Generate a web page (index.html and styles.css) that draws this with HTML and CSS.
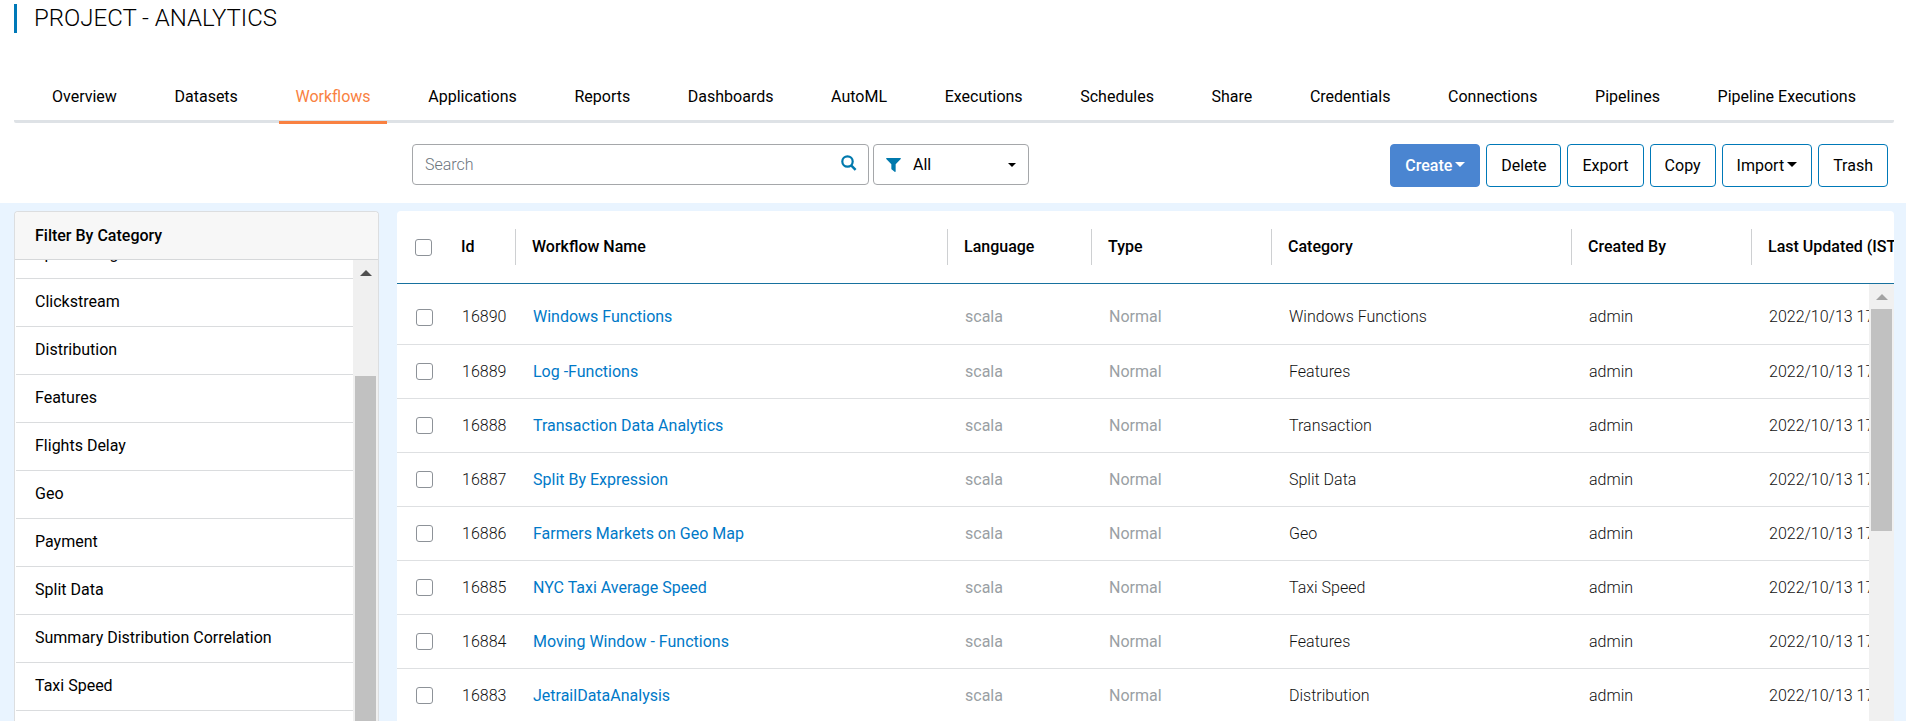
FILE: index.html
```html
<!DOCTYPE html>
<html lang="en">
<head>
<meta charset="utf-8">
<title>Project - Analytics</title>
<link rel="stylesheet" href="styles.css">
</head>
<body>
<header class="page-header">
  <h1 class="page-title">PROJECT - ANALYTICS</h1>
</header>
<nav class="tabs" aria-label="Project sections">
  <a class="tab" href="#">Overview</a>
  <a class="tab" href="#">Datasets</a>
  <a class="tab tab-active" href="#" aria-current="page">Workflows</a>
  <a class="tab" href="#">Applications</a>
  <a class="tab" href="#">Reports</a>
  <a class="tab" href="#">Dashboards</a>
  <a class="tab" href="#">AutoML</a>
  <a class="tab" href="#">Executions</a>
  <a class="tab" href="#">Schedules</a>
  <a class="tab" href="#">Share</a>
  <a class="tab" href="#">Credentials</a>
  <a class="tab" href="#">Connections</a>
  <a class="tab" href="#">Pipelines</a>
  <a class="tab" href="#">Pipeline Executions</a>
</nav>
<div class="toolbar">
  <div class="filters">
    <div class="field search">
      <input class="search-input" type="text" placeholder="Search" aria-label="Search">
      <svg class="search-icon" viewBox="0 0 16 16" aria-hidden="true"><circle cx="6.5" cy="6.5" r="5.2" fill="none" stroke="currentColor" stroke-width="2.2"/><path d="M10.4 10.6 L14.6 14.8" stroke="currentColor" stroke-width="2.5"/></svg>
    </div>
    <div class="field scope">
      <svg class="funnel-icon" viewBox="0 0 16 16" aria-hidden="true"><path fill="currentColor" d="M.8 1H15.2C15.9 1 16.1 1.7 15.7 2.1L10.3 7.7V15.2C10.3 15.9 9.7 16.1 9.2 15.7L6.2 13.4C5.9 13.2 5.7 12.9 5.7 12.6V7.7L.3 2.1C-.1 1.7 .1 1 .8 1Z"/></svg>
      <select class="scope-select" aria-label="Show"><option>All</option></select>
      <span class="caret"></span>
    </div>
  </div>
  <div class="actions">
    <button class="btn btn-primary" type="button">Create<span class="caret caret-inline"></span></button>
    <button class="btn" type="button">Delete</button>
    <button class="btn" type="button">Export</button>
    <button class="btn" type="button">Copy</button>
    <button class="btn" type="button">Import<span class="caret caret-inline"></span></button>
    <button class="btn" type="button">Trash</button>
  </div>
</div>
<main class="content">
  <aside class="sidebar">
    <h2 class="sidebar-title">Filter By Category</h2>
    <div class="sidebar-body">
      <ul class="categories">
        <li><a href="#">Spam Filing</a></li>
        <li><a href="#">Clickstream</a></li>
        <li><a href="#">Distribution</a></li>
        <li><a href="#">Features</a></li>
        <li><a href="#">Flights Delay</a></li>
        <li><a href="#">Geo</a></li>
        <li><a href="#">Payment</a></li>
        <li><a href="#">Split Data</a></li>
        <li><a href="#">Summary Distribution Correlation</a></li>
        <li><a href="#">Taxi Speed</a></li>
      </ul>
      <div class="scrollbar sidebar-scrollbar"><span class="scroll-up"></span><span class="thumb"></span></div>
    </div>
  </aside>
  <section class="panel">
    <table class="workflows">
      <colgroup><col class="c-check"><col class="c-id"><col class="c-name"><col class="c-lang"><col class="c-type"><col class="c-cat"><col class="c-by"><col class="c-date"></colgroup>
      <thead>
        <tr>
          <th><input class="check" type="checkbox" aria-label="Select all workflows"></th>
          <th>Id</th>
          <th><div class="head">Workflow Name</div></th>
          <th><div class="head">Language</div></th>
          <th><div class="head">Type</div></th>
          <th><div class="head">Category</div></th>
          <th><div class="head">Created By</div></th>
          <th><div class="head">Last Updated (IST)</div></th>
        </tr>
      </thead>
      <tbody>
        <tr><td><input class="check" type="checkbox" aria-label="Select 16890"></td><td>16890</td><td><a href="#">Windows Functions</a></td><td class="muted">scala</td><td class="muted">Normal</td><td>Windows Functions</td><td>admin</td><td>2022/10/13 17:12</td></tr>
        <tr><td><input class="check" type="checkbox" aria-label="Select 16889"></td><td>16889</td><td><a href="#">Log -Functions</a></td><td class="muted">scala</td><td class="muted">Normal</td><td>Features</td><td>admin</td><td>2022/10/13 17:12</td></tr>
        <tr><td><input class="check" type="checkbox" aria-label="Select 16888"></td><td>16888</td><td><a href="#">Transaction Data Analytics</a></td><td class="muted">scala</td><td class="muted">Normal</td><td>Transaction</td><td>admin</td><td>2022/10/13 17:12</td></tr>
        <tr><td><input class="check" type="checkbox" aria-label="Select 16887"></td><td>16887</td><td><a href="#">Split By Expression</a></td><td class="muted">scala</td><td class="muted">Normal</td><td>Split Data</td><td>admin</td><td>2022/10/13 17:12</td></tr>
        <tr><td><input class="check" type="checkbox" aria-label="Select 16886"></td><td>16886</td><td><a href="#">Farmers Markets on Geo Map</a></td><td class="muted">scala</td><td class="muted">Normal</td><td>Geo</td><td>admin</td><td>2022/10/13 17:12</td></tr>
        <tr><td><input class="check" type="checkbox" aria-label="Select 16885"></td><td>16885</td><td><a href="#">NYC Taxi Average Speed</a></td><td class="muted">scala</td><td class="muted">Normal</td><td>Taxi Speed</td><td>admin</td><td>2022/10/13 17:12</td></tr>
        <tr><td><input class="check" type="checkbox" aria-label="Select 16884"></td><td>16884</td><td><a href="#">Moving Window - Functions</a></td><td class="muted">scala</td><td class="muted">Normal</td><td>Features</td><td>admin</td><td>2022/10/13 17:12</td></tr>
        <tr><td><input class="check" type="checkbox" aria-label="Select 16883"></td><td>16883</td><td><a href="#">JetrailDataAnalysis</a></td><td class="muted">scala</td><td class="muted">Normal</td><td>Distribution</td><td>admin</td><td>2022/10/13 17:12</td></tr>
      </tbody>
    </table>
    <div class="scrollbar table-scrollbar"><span class="scroll-up"></span><span class="thumb"></span></div>
  </section>
</main>
</body>
</html>
```

FILE: styles.css
```css
* { box-sizing: border-box; }

body {
  margin: 0;
  height: 100vh;
  overflow: hidden;
  display: flex;
  flex-direction: column;
  background: #fff;
  color: #000;
  font: 400 16px/24px Roboto, "Liberation Sans", sans-serif;
}

a { color: inherit; text-decoration: none; }

.page-header { padding: 4px 14px 0; }

.page-title {
  margin: 0;
  padding-left: 17px;
  border-left: 3px solid #0079b8;
  font-size: 24px;
  font-weight: 300;
  line-height: 29px;
}

.tabs {
  display: flex;
  justify-content: space-between;
  margin: 36px 12px 0 14px;
  padding: 0 22px;
  border-bottom: 3px solid #dee2e6;
  border-radius: 2px;
}

.tab {
  margin-bottom: -4px;
  padding: 16px 16px 12px;
  border-bottom: 3px solid transparent;
  white-space: nowrap;
}

.tab-active { color: #f98141; border-bottom-color: #f98141; }

.toolbar {
  display: flex;
  justify-content: space-between;
  padding: 21px 18px 16px 412px;
}

.filters { display: flex; gap: 4px; }

.field {
  display: flex;
  align-items: center;
  height: 41px;
  border: 1px solid #a5a7aa;
  border-radius: 4px;
}

.search { width: 457px; padding: 0 11px 0 12px; }

.search-input {
  flex: 1;
  min-width: 0;
  padding: 0;
  border: 0;
  outline: 0;
  font: inherit;
  font-weight: 300;
}

.search-input::placeholder { color: #6c757d; }

.search-icon { width: 16px; height: 16px; margin-bottom: 4px; color: #0079ad; }

.scope { width: 156px; padding: 0 12px; gap: 12px; }

.funnel-icon { width: 15px; height: 15px; margin-bottom: 1px; color: #0079ad; }

.scope-select {
  flex: 1;
  min-width: 0;
  padding: 0;
  border: 0;
  background: none;
  appearance: none;
  color: inherit;
  font: inherit;
}

.caret {
  border: 5px solid transparent;
  border-top-color: currentColor;
  border-bottom: 0;
}

.scope .caret { border-width: 4px 4px 0; }

.caret-inline { display: inline-block; margin-left: 3px; vertical-align: 4px; }

.actions { display: flex; gap: 6px; }

.btn {
  height: 43px;
  padding: 0 14px;
  border: 1px solid #0079b8;
  border-radius: 4px;
  background: #fff;
  color: #000;
  font: inherit;
  white-space: nowrap;
}

.btn-primary { background: #4a85d1; border-color: #4a85d1; color: #fff; font-weight: 500; }

.content {
  flex: 1;
  min-height: 0;
  display: flex;
  gap: 18px;
  padding: 8px 12px 0 14px;
  background: #e9f4ff;
}

.sidebar {
  flex: none;
  width: 365px;
  display: flex;
  flex-direction: column;
  border: 1px solid #dcdee0;
  border-bottom: 0;
  border-radius: 4px 4px 0 0;
  background: #fff;
}

.sidebar-title {
  margin: 0;
  padding: 12px 20px 11px;
  border-bottom: 1px solid #d6d8da;
  border-radius: 4px 4px 0 0;
  background: #f7f7f7;
  font-size: 16px;
  font-weight: 500;
  line-height: 24px;
}

.sidebar-body { flex: 1; min-height: 0; display: flex; overflow: hidden; }

.categories {
  flex: 1;
  align-self: flex-start;
  margin: -29px 0 0 1px;
  padding: 0;
  list-style: none;
}

.categories a {
  display: block;
  height: 48px;
  padding: 11px 19px 0;
  border-bottom: 1px solid #dadcde;
}

.scrollbar { display: flex; flex-direction: column; background: #f0f0f0; }

.scroll-up {
  align-self: center;
  border: 6px solid transparent;
  border-bottom-color: #505050;
  border-top: 0;
}

.thumb { margin: 0 2px; background: #c1c1c1; }

.sidebar-scrollbar { width: 25px; padding-top: 10px; }
.sidebar-scrollbar .thumb { flex: 1; margin-top: 100px; }

.panel {
  position: relative;
  flex: 1;
  min-width: 0;
  overflow: hidden;
  border-radius: 4px 4px 0 0;
  background: #fff;
}

.workflows {
  width: 100%;
  min-width: 1534px;
  table-layout: fixed;
  border-collapse: separate;
  border-spacing: 0;
}

.c-check { width: 64px; }
.c-id { width: 54px; }
.c-lang { width: 144px; }
.c-type { width: 180px; }
.c-cat { width: 300px; }
.c-by { width: 180px; }
.c-date { width: 180px; }

.workflows th {
  height: 73px;
  padding: 0;
  border-bottom: 1px solid #17719f;
  font-weight: 500;
  text-align: left;
  white-space: nowrap;
}

.workflows th:first-child { padding-left: 18px; }

.head {
  height: 36px;
  padding: 6px 0 6px 16px;
  border-left: 1px solid #ced0d2;
}

.workflows td {
  height: 54px;
  padding: 0 0 0 18px;
  border-bottom: 1px solid #dee0e2;
  color: #111;
  font-weight: 300;
  white-space: nowrap;
}

.workflows td:first-child { padding-left: 19px; }
.workflows td:nth-child(2) { padding-left: 1px; }
.workflows tbody tr:first-child td { height: 61px; padding-top: 6px; }
.workflows td a { color: #0079c8; font-weight: 400; }
.workflows .muted { color: #9a9fa4; font-weight: 400; }

.check {
  display: block;
  width: 17px;
  height: 17px;
  margin: 0;
  border: 1px solid #8d9298;
  border-radius: 3px;
  background: #fff;
  appearance: none;
}

.table-scrollbar {
  position: absolute;
  top: 73px;
  right: 0;
  bottom: 0;
  width: 25px;
  padding-top: 10px;
}

.table-scrollbar .scroll-up { border-bottom-color: #a3a3a3; }
.table-scrollbar .thumb { height: 222px; margin-top: 9px; }
```
